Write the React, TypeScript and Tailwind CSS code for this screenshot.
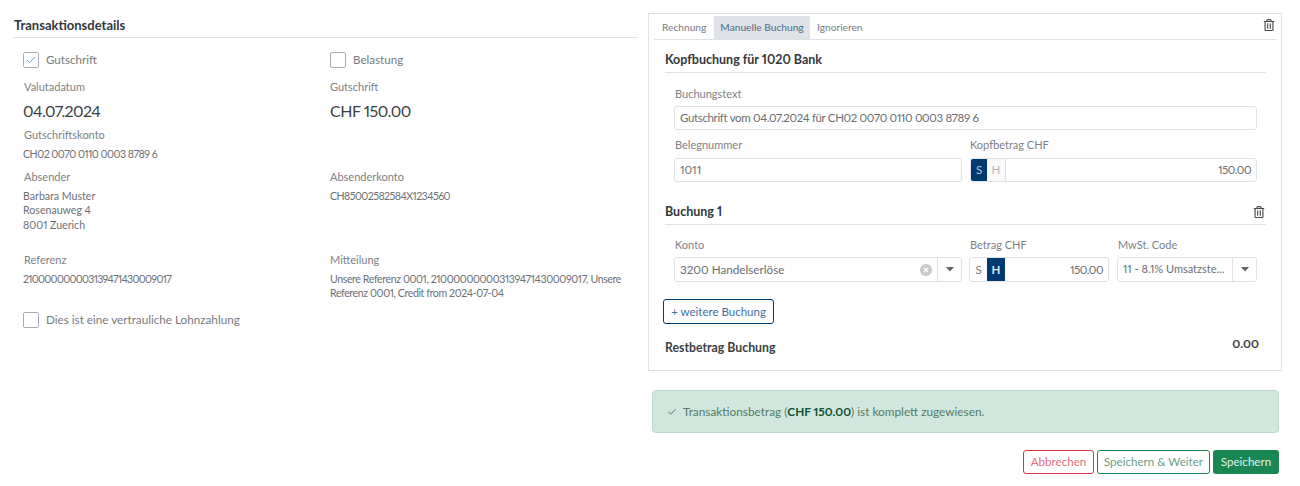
import { ReactNode } from 'react'
import { FaRegTrashAlt } from 'react-icons/fa'
import { Check } from 'lucide-react'

/* ── small pieces ─────────────────────────── */
function Label({ children, className = '' }: { children: ReactNode; className?: string }) {
  return <div className={`text-[11px] leading-[14px] text-[#7d8186] ${className}`}>{children}</div>
}

function Value({ children, className = '' }: { children: ReactNode; className?: string }) {
  return <div className={`text-[10.6px] leading-[14.5px] text-[#6d7175] ${className}`}>{children}</div>
}

function Box({ checked = false }: { checked?: boolean }) {
  return (
    <span className="flex h-4 w-4 shrink-0 items-center justify-center rounded-[2px] border border-[#a9adb2] bg-white">
      {checked && <Check size={12} strokeWidth={1.6} className="text-[#4f8fd6]" />}
    </span>
  )
}

function Caret() {
  return (
    <span className="flex w-6 shrink-0 items-center justify-center self-stretch border-l border-[#dee2e6]">
      <svg width="8" height="5" viewBox="0 0 8 5">
        <path d="M0 0h8L4 4.5z" fill="#5f6368" />
      </svg>
    </span>
  )
}

function ClearIcon() {
  return (
    <svg width="12" height="12" viewBox="0 0 12 12" className="shrink-0">
      <circle cx="6" cy="6" r="6" fill="#c8c9cb" />
      <path d="M4 4l4 4M8 4l-4 4" stroke="#fff" strokeWidth="1.6" />
    </svg>
  )
}

function SectionHead({ title, trash = false }: { title: string; trash?: boolean }) {
  return (
    <div className="ml-[16px] mr-[15px] flex h-[25px] items-center justify-between border-b border-[#dee2e6] pr-px">
      <span className="text-[12.5px] font-bold text-[#33373b]">{title}</span>
      {trash && <FaRegTrashAlt size={12} className="text-[#45494c]" />}
    </div>
  )
}

function SollHaben({ active, amount, className = '' }: { active: 'S' | 'H'; amount: string; className?: string }) {
  return (
    <div className={`flex items-stretch overflow-hidden rounded-[3px] border border-[#dee2e6] text-[11.5px] ${className}`}>
      {active === 'S' ? (
        <>
          <span className="flex w-4 items-center justify-center bg-[#003a70] text-[#b9c7d6]">S</span>
          <span className="flex w-[19px] items-center justify-center border-r border-[#dee2e6] bg-[#fafafa] text-[#b5b8bb]">H</span>
        </>
      ) : (
        <>
          <span className="flex w-[17px] items-center justify-center text-[#777b80]">S</span>
          <span className="flex w-[18px] items-center justify-center bg-[#003a70] font-bold text-[#dfe6ee]">H</span>
        </>
      )}
      <span className="flex flex-1 items-center justify-end pr-[5px] tracking-[-0.5px] text-[#6a6e72]">{amount}</span>
    </div>
  )
}

/* ── left column ──────────────────────────── */
function Details() {
  return (
    <div className="ml-[13px] w-[625px] shrink-0">
      <div className="mt-[15px] flex h-[23px] items-center border-b border-[#dee2e6] pl-px text-[13px] font-bold text-[#33373b]">
        Transaktionsdetails
      </div>
      <div className="grid grid-cols-[307px_1fr] pl-[10px]">
        <div className="mt-[14px] flex h-4 items-center gap-[7px] text-[11.6px] text-[#777b80]">
          <Box checked />
          Gutschrift
        </div>
        <div className="mt-[14px] flex h-4 items-center gap-[7px] text-[11.6px] text-[#777b80]">
          <Box />
          Belastung
        </div>

        <Label className="mt-[12px] pl-px">Valutadatum</Label>
        <Label className="mt-[12px]">Gutschrift</Label>
        <div className="mt-[5px] h-[24px] text-[16px] leading-[24px] tracking-[-0.6px] text-[#3b3f43]">04.07.2024</div>
        <div className="mt-[5px] h-[24px] text-[16px] leading-[24px] tracking-[-0.5px] text-[#3b3f43]">CHF 150.00</div>

        <Label className="mt-[5px] pl-px">Gutschriftskonto</Label>
        <div />
        <Value className="mt-[5px] h-[14.5px] tracking-[-0.5px]">CH02 0070 0110 0003 8789 6</Value>
        <div />

        <Label className="mt-[8px] pl-px">Absender</Label>
        <Label className="mt-[8px]">Absenderkonto</Label>
        <Value className="mt-[5px] h-[44px]">
          Barbara Muster
          <br />
          Rosenauweg 4
          <br />
          8001 Zuerich
        </Value>
        <Value className="mt-[5px] h-[44px] tracking-[-0.55px]">CH85002582584X1234560</Value>

        <Label className="mt-[20px] pl-px">Referenz</Label>
        <Label className="mt-[20px]">Mitteilung</Label>
        <Value className="mt-[5px] h-[30px] tracking-[-0.7px]">210000000003139471430009017</Value>
        <Value className="mt-[5px] h-[30px] w-[298px] tracking-[-0.4px]">
          Unsere Referenz 0001, 210000000003139471430009017, Unsere Referenz 0001, Credit from 2024-07-04
        </Value>

        <div className="col-span-2 mt-[10px] flex h-4 items-center gap-[7px] text-[11.7px] text-[#777b80]">
          <Box />
          Dies ist eine vertrauliche Lohnzahlung
        </div>
      </div>
    </div>
  )
}

/* ── right column ─────────────────────────── */
function Booking() {
  const input = 'flex h-[24px] items-center rounded-[3px] border border-[#dee2e6] px-[5px] text-[11.5px] text-[#6a6e72]'
  return (
    <div className="ml-[10px] w-[634px] shrink-0 pt-[13px]">
      <div className="h-[358px] border border-[#dee2e6] pt-[2px]">
        {/* tabs */}
        <div className="mx-[5px] flex h-[24px] items-stretch border-b border-[#dee2e6] text-[10.2px]">
          <span className="flex w-[60px] items-center pl-[8px] text-[#777b80]">Rechnung</span>
          <span className="flex w-[96px] items-center justify-center bg-[#dfe3e8] text-[#4f6a86]">Manuelle Buchung</span>
          <span className="flex items-center pl-[7px] text-[#777b80]">Ignorieren</span>
          <span className="ml-auto flex items-center pb-[5px] pr-px">
            <FaRegTrashAlt size={12} className="text-[#45494c]" />
          </span>
        </div>

        <div className="mt-[8px]">
          <SectionHead title="Kopfbuchung für 1020 Bank" />
        </div>
        <div className="ml-[25px] mr-[24px]">
          <Label className="mt-[14px] pl-px">Buchungstext</Label>
          <div className={`mt-[5px] tracking-[-0.35px] ${input}`}>Gutschrift vom 04.07.2024 für CH02 0070 0110 0003 8789 6</div>
          <div className="mt-[8px] grid grid-cols-[288px_1fr] gap-x-2">
            <Label className="pl-px">Belegnummer</Label>
            <Label>Kopfbetrag CHF</Label>
            <div className={`mt-[6px] ${input}`}>1011</div>
            <SollHaben active="S" amount="150.00" className="mt-[6px] h-[24px]" />
          </div>
        </div>

        <div className="mt-[18px]">
          <SectionHead title="Buchung 1" trash />
        </div>
        <div className="ml-[25px] mr-[24px] mt-[13px] grid grid-cols-[288px_140px_141px] gap-x-[7px]">
          <Label className="pl-px">Konto</Label>
          <Label className="pl-px">Betrag CHF</Label>
          <Label className="ml-px pl-px">MwSt. Code</Label>
          <div className="mt-[5px] flex h-[25px] items-center rounded-[3px] border border-[#dee2e6] pl-[5px] text-[11.7px] text-[#6a6e72]">
            <span className="flex-1">3200 Handelserlöse</span>
            <span className="mr-[5px]">
              <ClearIcon />
            </span>
            <Caret />
          </div>
          <SollHaben active="H" amount="150.00" className="mt-[5px] h-[25px]" />
          <div className="ml-px mt-[5px] flex h-[25px] items-center rounded-[3px] border border-[#dee2e6] pl-[5px] text-[11px] text-[#6a6e72]">
            <span className="flex-1 whitespace-nowrap">11 - 8.1% Umsatzste...</span>
            <Caret />
          </div>
        </div>

        <button className="ml-[14px] mt-[17px] flex h-[25px] w-[111px] items-center justify-center rounded-[3px] border border-[#003a70] text-[11.5px] text-[#44709a]">
          + weitere Buchung
        </button>

        <div className="ml-[16px] mr-[22px] mt-[11px] flex items-start justify-between">
          <span className="mt-[4px] text-[12.3px] font-bold text-[#3b3f43]">Restbetrag Buchung</span>
          <span className="text-[12px] font-bold text-[#3b3f43]">0.00</span>
        </div>
      </div>

      {/* success note */}
      <div className="ml-[4px] mr-[3px] mt-[19px] flex h-[43px] items-center rounded-[4px] border border-[#badbcc] bg-[#d1e7dd] pl-[14px] text-[11.8px] text-[#567a69]">
        <Check size={10} strokeWidth={1.8} className="mr-[6px] text-[#2f4a3d]" />
        <span>
          Transaktionsbetrag (<b className="font-bold text-[#0f5132]">CHF 150.00</b>) ist komplett zugewiesen.
        </span>
      </div>

      <div className="mr-[3px] mt-[17px] flex justify-end gap-[3px] text-[11.6px]">
        <button className="flex h-[24px] w-[71px] items-center justify-center rounded-[3px] border border-[#dc3545] text-[#e0707c]">
          Abbrechen
        </button>
        <button className="flex h-[24px] w-[113px] items-center justify-center rounded-[3px] border border-[#198754] text-[#6b9f88]">
          Speichern &amp; Weiter
        </button>
        <button className="flex h-[24px] w-[66px] items-center justify-center rounded-[3px] bg-[#198754] text-[#e3f1ea]">
          Speichern
        </button>
      </div>
    </div>
  )
}

export default function App() {
  return (
    <div className="flex h-[486px] w-[1300px] overflow-hidden bg-white font-['Lato','Noto_Sans',sans-serif] proportional-nums">
      <Details />
      <Booking />
    </div>
  )
}
